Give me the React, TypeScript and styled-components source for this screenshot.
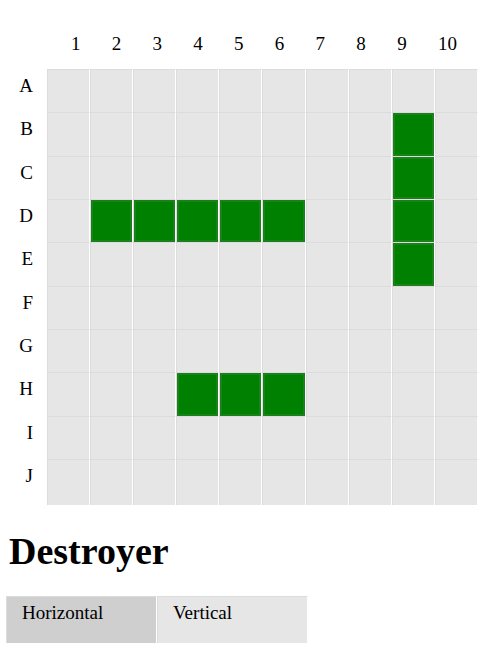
import React, { useState } from "react";
import styled, { createGlobalStyle } from "styled-components";

const GlobalStyle = createGlobalStyle`
  * { box-sizing: border-box; }
  body {
    margin: 0;
    background: #fff;
    color: #000;
    font-family: "Liberation Serif", "Times New Roman", serif;
    font-size: 19px;
    line-height: 22px;
  }
`;

const Page = styled.main`
  padding: 33px 22px 12px 6px;
`;

const ColumnLabels = styled.div`
  display: flex;
  justify-content: space-between;
  padding: 0 21px 0 65px;
  margin-bottom: 14px;
`;

const Board = styled.div`
  display: grid;
  grid-template-columns: 41px 1fr;
  height: 436px;
`;

const rowTemplate = "repeat(9, minmax(0, 1fr)) 46px";

const RowLabels = styled.div`
  display: grid;
  grid-template-rows: ${rowTemplate};
  padding: 6px 14px 0 0;
  margin-bottom: -6px;
  text-align: right;
`;

const Cells = styled.div`
  display: grid;
  grid-template-columns: repeat(10, minmax(0, 1fr));
  grid-template-rows: ${rowTemplate};
`;

const Cell = styled.button<{ $ship: boolean }>`
  appearance: none;
  min-width: 0;
  margin: 0;
  padding: 0;
  border: 0 solid #dcdcdc;
  border-width: 1px 1px 0 1px;
  border-right-color: #fff;
  border-radius: 0;
  background: ${(p) => (p.$ship ? "#008000" : "#e6e6e6")};
  box-shadow: ${(p) =>
    p.$ship ? "inset 0 0 0 1px #207c20, inset 0 0 0 2px #158515" : "none"};
`;

const ShipName = styled.h1`
  margin: 24px 0 22px;
  padding-left: 3px;
  font-size: 38px;
  line-height: 45px;
  font-weight: bold;
`;

const Directions = styled.div`
  display: flex;
`;

const Direction = styled.button<{ $active: boolean }>`
  appearance: none;
  display: flex;
  align-items: flex-start;
  width: 151px;
  height: 47px;
  margin: 0;
  padding: 5px 15px;
  border: 0 solid #dcdcdc;
  border-width: 1px 1px 0 1px;
  border-right-color: #fff;
  border-radius: 0;
  background: ${(p) => (p.$active ? "#cfcfcf" : "#e6e6e6")};
  color: #000;
  font: inherit;
  text-align: left;
`;

const columns = [1, 2, 3, 4, 5, 6, 7, 8, 9, 10];
const rows = ["A", "B", "C", "D", "E", "F", "G", "H", "I", "J"];
const ships = new Set([
  "B9", "C9", "D9", "E9",
  "D2", "D3", "D4", "D5", "D6",
  "H4", "H5", "H6",
]);

export default function App() {
  const [direction, setDirection] = useState("Horizontal");
  return (
    <>
      <GlobalStyle />
      <Page>
        <ColumnLabels>
          {columns.map((c) => (
            <span key={c}>{c}</span>
          ))}
        </ColumnLabels>
        <Board>
          <RowLabels>
            {rows.map((r) => (
              <span key={r}>{r}</span>
            ))}
          </RowLabels>
          <Cells>
            {rows.flatMap((r) =>
              columns.map((c) => (
                <Cell
                  key={r + c}
                  type="button"
                  aria-label={r + c}
                  $ship={ships.has(r + c)}
                />
              ))
            )}
          </Cells>
        </Board>
        <ShipName>Destroyer</ShipName>
        <Directions>
          {["Horizontal", "Vertical"].map((d) => (
            <Direction
              key={d}
              type="button"
              aria-pressed={d === direction}
              $active={d === direction}
              onClick={() => setDirection(d)}
            >
              {d}
            </Direction>
          ))}
        </Directions>
      </Page>
    </>
  );
}
